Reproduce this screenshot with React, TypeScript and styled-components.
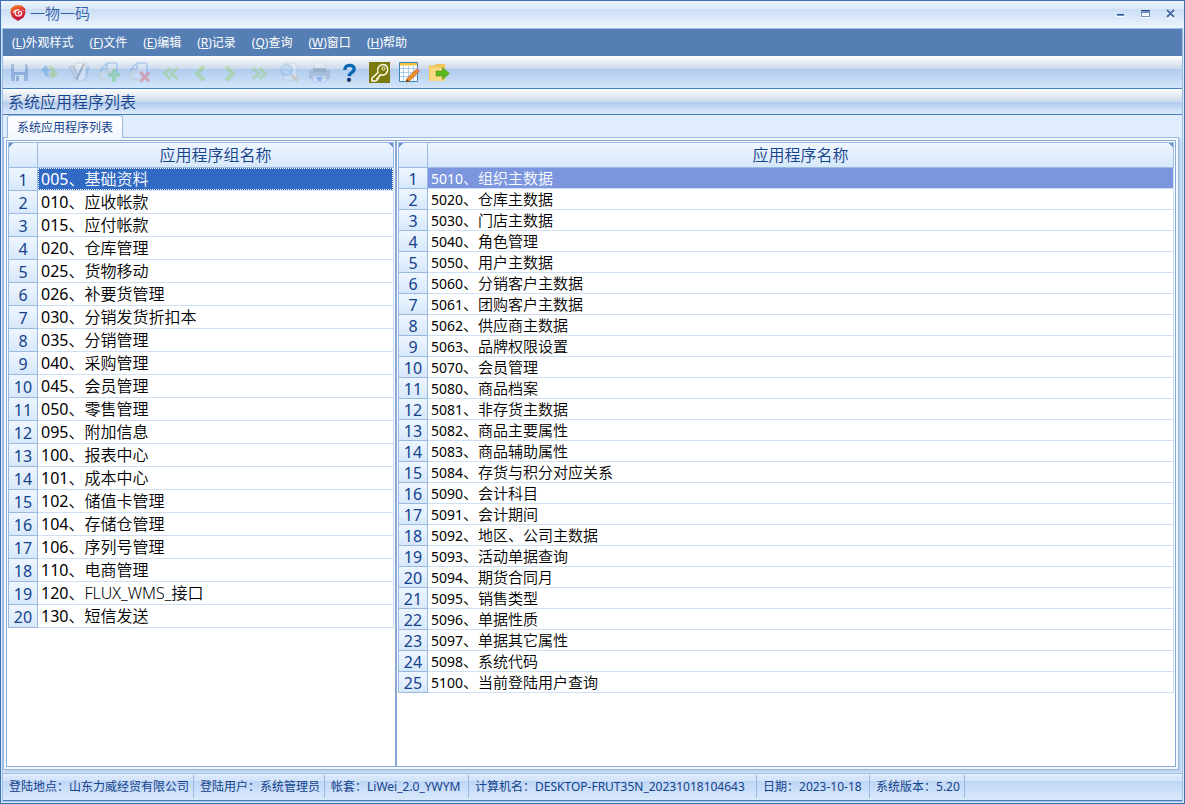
import React from 'react';
import styled, { createGlobalStyle } from 'styled-components';

const NAVY = '#15428b';
const LINE = '#9bb9de';
const SOFT_LINE = '#cfe0f4';
const EDGE = '#4a7ebb';

const GlobalStyle = createGlobalStyle`
  *, *::before, *::after { box-sizing: border-box; }
  body {
    margin: 0;
    font-family: "Noto Sans", "Noto Sans CJK SC", sans-serif;
    font-size: 12px;
    color: ${NAVY};
  }
`;

const AppWindow = styled.div`
  min-height: 100vh;
  display: flex;
  flex-direction: column;
  border: 1px solid #3e6fae;
  background: #dce9fa;
`;

const TitleBar = styled.header`
  height: 27px;
  padding: 0 6px 3px 9px;
  display: flex;
  align-items: center;
  gap: 4px;
  background: linear-gradient(#ecf4fe 0, #dbe8f8 8px, #c9def6 8px, #edf5fe 27px);
`;

const AppName = styled.h1`
  margin: 0;
  flex: 1;
  font-size: 15px;
  line-height: 22px;
  font-weight: 350;
  color: #3561a4;
`;

const WindowButtons = styled.div`
  display: flex;
  gap: 12px;
`;

const WindowButton = styled.button`
  width: 13px;
  height: 13px;
  padding: 0;
  border: 0;
  background: none;
  svg { display: block; }
`;

const Frame = styled.div`
  flex: 1;
  display: flex;
  flex-direction: column;
  margin: 0 1px 1px;
  border: 1px solid #9bc0e8;
`;

const MenuBar = styled.nav`
  height: 27px;
  padding: 0 9px;
  display: flex;
  align-items: center;
  gap: 16px;
  background: #557eb4;
`;

const MenuLink = styled.a`
  color: #fff;
  text-decoration: none;
  line-height: 18px;
  white-space: nowrap;
`;

const ToolBar = styled.div`
  height: 33px;
  padding: 0 6px;
  display: flex;
  align-items: center;
  gap: 9px;
  border-bottom: 1px solid ${EDGE};
  background: linear-gradient(#fefefe 0, #cbd9ea 13px, #afcbee 13px, #d3e5fa 32px);
`;

const ToolButton = styled.button`
  width: 21px;
  height: 21px;
  padding: 0;
  border: 0;
  background: none;
  svg { display: block; }
  &:disabled { opacity: 0.3; }
`;

const Heading = styled.h2`
  margin: 0;
  height: 26px;
  padding: 0 5px;
  font-size: 16px;
  line-height: 26px;
  font-weight: 350;
  border-bottom: 1px solid ${EDGE};
  background: linear-gradient(#fefefe 0, #cbd9ea 13px, #afcbee 13px, #dceafc 25px);
`;

const TabStrip = styled.div`
  height: 22px;
  padding: 0 4px;
  display: flex;
  align-items: flex-start;
  background: #e0edfe;
`;

const Tab = styled.button`
  height: 23px;
  padding: 1px 9px 0;
  position: relative;
  border: 1px solid ${LINE};
  border-bottom: 0;
  border-radius: 3px 3px 0 0;
  background: linear-gradient(#fff, #f3f8ff);
  color: ${NAVY};
  font: inherit;
  line-height: 21px;
`;

const TabPage = styled.main`
  flex: 1;
  display: flex;
  margin: 0 3px 3px 0;
  padding: 2px;
  border: 1px solid ${LINE};
  background: #f3f8ff;
  box-shadow: 2px 2px 1px #bdd2ee;
`;

const Panels = styled.div`
  flex: 1;
  display: grid;
  grid-template-columns: minmax(0, 1fr) minmax(0, 2fr);
`;

const Panel = styled.section`
  padding: 1px;
  border: 1px solid #88a9d6;
  background: #fff;
`;

const Grid = styled.table`
  width: 100%;
  table-layout: fixed;
  border-collapse: separate;
  border-spacing: 0;
`;

const IndexCol = styled.col`
  width: 30px;
`;

const HeadCell = styled.th`
  height: 26px;
  padding: 0;
  border: solid ${LINE};
  border-width: 1px 1px 1px 0;
  background: linear-gradient(#eef6ff, #d7e8fb);
  font-size: 16px;
  line-height: 24px;
  font-weight: 350;
`;

const CornerCell = styled(HeadCell)`
  border-left-width: 1px;
  background:
    linear-gradient(135deg, #6f99cc 3px, transparent 3px),
    linear-gradient(#eef6ff, #d7e8fb);
`;

const TitleCell = styled(HeadCell)`
  background:
    linear-gradient(225deg, #6f99cc 3px, transparent 3px),
    linear-gradient(#eef6ff, #d7e8fb);
`;

const IndexCell = styled.th<{ $height: number }>`
  height: ${(p) => p.$height}px;
  padding: 2px 0 0;
  border: solid ${LINE};
  border-width: 0 1px 1px 1px;
  background: linear-gradient(#eef6ff, #d7e8fb);
  font-size: 16px;
  line-height: ${(p) => p.$height - 3}px;
  font-weight: 400;
`;

const NameCell = styled.td<{ $tone?: 'active' | 'passive' }>`
  padding: 0;
  border: solid ${SOFT_LINE};
  border-width: 0 1px 1px 0;
  background: ${(p) => (p.$tone === 'active' ? '#316ac5' : p.$tone === 'passive' ? '#7b96df' : '#fff')};
  color: ${(p) => (p.$tone ? '#fff' : '#000')};
`;

const Name = styled.div<{ $height: number; $size: number; $focus?: boolean }>`
  height: ${(p) => p.$height - 1}px;
  padding: 0 2px;
  border: 1px dotted ${(p) => (p.$focus ? '#fff' : 'transparent')};
  font-size: ${(p) => p.$size}px;
  font-weight: 350;
  line-height: ${(p) => p.$height - 3}px;
  white-space: nowrap;
`;

const Code = styled.span<{ $size: number }>`
  font-size: ${(p) => p.$size}px;
  font-weight: 400;
`;

const StatusBar = styled.footer`
  height: 27px;
  display: flex;
  align-items: flex-start;
  padding-top: 1px;
  border-top: 1px solid ${LINE};
  background: linear-gradient(#eef5fe 0, #d9e7fa 2px, #d3e3f8 7px, #bdd6f6 7px, #dae9fb 26px);
`;

const StatusItem = styled.span<{ $width: number }>`
  min-width: ${(p) => p.$width}px;
  height: 23px;
  padding: 0 4px 0 6px;
  border-right: 1px solid ${LINE};
  line-height: 23px;
  white-space: nowrap;
`;

const BottomEdge = styled.div`
  height: 1px;
  background: ${EDGE};
`;

const Logo = () => (
  <svg width="16" height="16" viewBox="0 0 16 16" aria-hidden="true">
    <defs>
      <linearGradient id="logo" x1="0" y1="0" x2="0.3" y2="1">
        <stop offset="0" stopColor="#f59a1c" />
        <stop offset="0.45" stopColor="#e2392f" />
        <stop offset="1" stopColor="#c3123f" />
      </linearGradient>
    </defs>
    <path d="M4 .8L8 0l4 .8 3 2.700.5 4.500-2 4.500L8 16l-5.500-3.500L.5 8 1 3.500z" fill="url(#logo)" />
    <path d="M3.200 8C4.500 4.800 7 4.800 9.500 5M6 6.500c-1.500 2-.5 4.500 2 4.500 2.200 0 3.700-1.500 3.700-3.300C11.700 6.200 9 6 8.300 7.600c-.3.900.4 1.400 1.200 1.200" fill="none" stroke="#fff" strokeWidth="1.200" />
    <path d="M12 4.500l1.800 1.800" stroke="#fbd9dc" strokeWidth="1" />
  </svg>
);

const SaveIcon = () => (
  <>
    <path d="M2 2h15l2 2v15H2z" fill="#3567ae" />
    <path d="M5 2h11v8H5z" fill="#dbe8f8" />
    <path d="M6 13h9v6H6z" fill="#e8effa" />
    <path d="M7 14h3v5H7z" fill="#27508e" />
  </>
);

const RefreshIcon = () => (
  <>
    <path d="M6.500 3l5 6h-3c0 3 .5 5 3 6.500C7 15.500 4.500 13 4.500 9h-3z" fill="#2c86dd" />
    <path d="M14 17l-5-6h3c0-3-.5-5-3-7.500 5 0 7.500 3.500 7.500 7.500h3z" fill="#8fc928" />
  </>
);

const EditIcon = () => (
  <>
    <path d="M9 4l12 1-5 14-7-1z" fill="#4f9ae8" />
    <path d="M6 1h11v14l-3 4H6z" fill="#fdfdfd" stroke="#98a4b4" />
    <path d="M0 5l4-1 5 9-1 5-2-3z" fill="#c9cdd3" stroke="#6d747f" />
    <path d="M15 2L9 14l-1 4" fill="none" stroke="#4c525c" strokeWidth="2" />
  </>
);

const PageShape = () => (
  <>
    <path d="M8 1h9v14H2V7z" fill="#dceafb" />
    <path d="M2 10V7l6-6h9l1 1v9M8 1v6H2" fill="none" stroke="#3f8ae0" strokeWidth="1.500" />
    <path d="M2 10h14M2 10v8h8" fill="none" stroke="#d9cfa6" strokeWidth="2" />
  </>
);

const AddIcon = () => (
  <>
    <PageShape />
    <path d="M13 7h4v4h4v4h-4v5h-4v-5H9v-4h4z" fill="#45c043" />
  </>
);

const DeleteIcon = () => (
  <>
    <PageShape />
    <path d="M11.500 10.500l8.500 9M20 10.500l-8.500 9" stroke="#ee2a25" strokeWidth="3" />
  </>
);

const Chevron = ({ d, width }: { d: string; width: number }) => (
  <path d={d} fill="none" stroke="#86d036" strokeWidth={width} />
);

const PreviewIcon = () => (
  <>
    <path d="M5 1h10l3 3v14H5z" fill="#f7f9fc" stroke="#a5b1c4" />
    <circle cx="7.500" cy="8" r="5.500" fill="#a8d0f5" stroke="#6f9edb" strokeWidth="1.500" />
    <path d="M12.500 13l6 6" stroke="#e09c3e" strokeWidth="2.500" />
  </>
);

const PrintIcon = () => (
  <>
    <path d="M5 0h11v9H5z" fill="#f5f7fa" stroke="#a9b4c6" />
    <path d="M0 8h21v9H0z" fill="#8191b0" />
    <path d="M4 6h13v4H4z" fill="#5d6b86" />
    <path d="M4 14h13v6H4z" fill="#e8effa" stroke="#8fa2c2" />
    <path d="M7 15h7l-1.500 4h-4z" fill="#3272ea" />
  </>
);

const HelpIcon = () => (
  <>
    <ellipse cx="10" cy="19.500" rx="6.500" ry="1.200" fill="#cfd0d6" />
    <path d="M5.800 8C5.500 2 15.200 2 15.200 7c0 3.700-5 3.700-5 7.200" fill="none" stroke="#0868b0" strokeWidth="3.400" />
    <circle cx="10" cy="17.800" r="2.100" fill="#0b2f72" />
  </>
);

const KeyIcon = () => (
  <>
    <path d="M0 0h21v21H0z" fill="#7b7a0e" />
    <path d="M9 10.500C7.500 6 10.500 2.500 14 2.500s5.500 3 4.500 6.500-4 4.800-7 3.700L9.500 15v1.500H8V18l-1.500 1H3v-3z" fill="none" stroke="#fffde8" strokeWidth="1.500" />
    <circle cx="14.500" cy="6.500" r="1.600" fill="none" stroke="#fffde8" />
  </>
);

const TableIcon = () => (
  <>
    <path d="M.5.500h18v19H.5z" fill="#fff" stroke="#3f83b5" />
    <path d="M1 1h17v2.500H1z" fill="#f0c33c" />
    <path d="M1 6.500h17M1 10.500h17M1 14.500h17M4.500 4v15M9.500 4v15M14.500 4v15" stroke="#a9cdee" />
    <path d="M8 16.500L17.500 7l2.500 2.500-9.500 9.500-3.500 1z" fill="#f08a24" stroke="#b3611c" strokeWidth=".7" />
    <path d="M17 7.500L18.500 6 21 8.500 19.500 10z" fill="#d97f8e" />
    <path d="M7 20l.8-3 2.200 2.200z" fill="#5a4634" />
  </>
);

const ExitIcon = () => (
  <>
    <path d="M0 3.500h6L7 2h9v17H0z" fill="#f3c45a" />
    <path d="M1 5.500h14V19H1z" fill="#fbd982" />
    <path d="M7 9h6.500V5.500l7 6-7 6V14H7z" fill="#5cb81f" stroke="#479a18" strokeWidth=".6" />
  </>
);

const tools: { label: string; art: React.ReactNode; enabled?: boolean }[] = [
  { label: '保存', art: <SaveIcon /> },
  { label: '刷新', art: <RefreshIcon /> },
  { label: '编辑', art: <EditIcon /> },
  { label: '新增', art: <AddIcon /> },
  { label: '删除', art: <DeleteIcon /> },
  { label: '首条', art: <Chevron d="M11.500 6l-6 5.500 6 5.500M18.500 6l-6 5.500 6 5.500" width={3} /> },
  { label: '上一条', art: <Chevron d="M15 4.500l-7 7 7 7" width={4} /> },
  { label: '下一条', art: <Chevron d="M7 4.500l7 7-7 7" width={4} /> },
  { label: '末条', art: <Chevron d="M3.500 6l6 5.500-6 5.500M10.500 6l6 5.500-6 5.500" width={3} /> },
  { label: '预览', art: <PreviewIcon /> },
  { label: '打印', art: <PrintIcon /> },
  { label: '帮助', art: <HelpIcon />, enabled: true },
  { label: '密码', art: <KeyIcon />, enabled: true },
  { label: '表格', art: <TableIcon />, enabled: true },
  { label: '退出', art: <ExitIcon />, enabled: true },
];

const menus = [
  ['L', '外观样式'],
  ['F', '文件'],
  ['E', '编辑'],
  ['R', '记录'],
  ['Q', '查询'],
  ['W', '窗口'],
  ['H', '帮助'],
];

const groups = [
  '005、基础资料', '010、应收帐款', '015、应付帐款', '020、仓库管理', '025、货物移动',
  '026、补要货管理', '030、分销发货折扣本', '035、分销管理', '040、采购管理', '045、会员管理',
  '050、零售管理', '095、附加信息', '100、报表中心', '101、成本中心', '102、储值卡管理',
  '104、存储仓管理', '106、序列号管理', '110、电商管理', '120、FLUX_WMS_接口', '130、短信发送',
];

const programs = [
  '5010、组织主数据', '5020、仓库主数据', '5030、门店主数据', '5040、角色管理', '5050、用户主数据',
  '5060、分销客户主数据', '5061、团购客户主数据', '5062、供应商主数据', '5063、品牌权限设置', '5070、会员管理',
  '5080、商品档案', '5081、非存货主数据', '5082、商品主要属性', '5083、商品辅助属性', '5084、存货与积分对应关系',
  '5090、会计科目', '5091、会计期间', '5092、地区、公司主数据', '5093、活动单据查询', '5094、期货合同月',
  '5095、销售类型', '5096、单据性质', '5097、单据其它属性', '5098、系统代码', '5100、当前登陆用户查询',
];

const statuses = [
  { text: '登陆地点：山东力威经贸有限公司', width: 191 },
  { text: '登陆用户：系统管理员', width: 131 },
  { text: '帐套：LiWei_2.0_YWYM', width: 144 },
  { text: '计算机名：DESKTOP-FRUT35N_20231018104643', width: 288 },
  { text: '日期：2023-10-18', width: 113 },
  { text: '系统版本：5.20', width: 94 },
];

interface ListProps {
  title: string;
  rows: string[];
  rowHeight: number;
  fontSize: number;
  codeSize: number;
  focused?: boolean;
}

const ListGrid = ({ title, rows, rowHeight, fontSize, codeSize, focused }: ListProps) => (
  <Panel>
    <Grid>
      <colgroup>
        <IndexCol />
        <col />
      </colgroup>
      <thead>
        <tr>
          <CornerCell aria-label="序号" />
          <TitleCell scope="col">{title}</TitleCell>
        </tr>
      </thead>
      <tbody>
        {rows.map((row, i) => {
          const split = row.indexOf('、');
          return (
            <tr key={row}>
              <IndexCell scope="row" $height={rowHeight}>{i + 1}</IndexCell>
              <NameCell $tone={i > 0 ? undefined : focused ? 'active' : 'passive'}>
                <Name $height={rowHeight} $size={fontSize} $focus={focused && i === 0}>
                  <Code $size={codeSize}>{row.slice(0, split)}</Code>
                  {row.slice(split)}
                </Name>
              </NameCell>
            </tr>
          );
        })}
      </tbody>
    </Grid>
  </Panel>
);

export default function App() {
  return (
    <AppWindow>
      <GlobalStyle />
      <TitleBar>
        <Logo />
        <AppName>一物一码</AppName>
        <WindowButtons>
          <WindowButton aria-label="最小化">
            <svg width="13" height="13"><path d="M2 7h7v1H2z" fill="#2f5288" /><path d="M2 8h7v1H2z" fill="#6f8fc0" /><path d="M2 9h7v1H2z" fill="#fff" /></svg>
          </WindowButton>
          <WindowButton aria-label="最大化">
            <svg width="13" height="13"><path d="M1 3h9v7H1z" fill="#6f90bd" /><path d="M1 3h9v1H1z" fill="#2f5288" /><path d="M2 6h7v3H2z" fill="#f3f8ff" /><path d="M1 10h9v1H1z" fill="#fff" /></svg>
          </WindowButton>
          <WindowButton aria-label="关闭">
            <svg width="13" height="13"><path d="M2 4l7 7M9 4l-7 7" stroke="#fff" strokeWidth="2.500" /><path d="M2 3l7 7M9 3l-7 7" stroke="#4a6ea6" strokeWidth="2" /></svg>
          </WindowButton>
        </WindowButtons>
      </TitleBar>
      <Frame>
        <MenuBar>
          {menus.map(([key, name]) => (
            <MenuLink key={key} href="#">(<u>{key}</u>){name}</MenuLink>
          ))}
        </MenuBar>
        <ToolBar>
          {tools.map((tool) => (
            <ToolButton key={tool.label} aria-label={tool.label} disabled={!tool.enabled}>
              <svg width="21" height="21" viewBox="0 0 21 21">{tool.art}</svg>
            </ToolButton>
          ))}
        </ToolBar>
        <Heading>系统应用程序列表</Heading>
        <TabStrip>
          <Tab>系统应用程序列表</Tab>
        </TabStrip>
        <TabPage>
          <Panels>
            <ListGrid title="应用程序组名称" rows={groups} rowHeight={23} fontSize={16} codeSize={16} focused />
            <ListGrid title="应用程序名称" rows={programs} rowHeight={21} fontSize={15} codeSize={14} />
          </Panels>
        </TabPage>
        <StatusBar>
          {statuses.map((item) => (
            <StatusItem key={item.text} $width={item.width}>{item.text}</StatusItem>
          ))}
        </StatusBar>
        <BottomEdge />
      </Frame>
    </AppWindow>
  );
}
